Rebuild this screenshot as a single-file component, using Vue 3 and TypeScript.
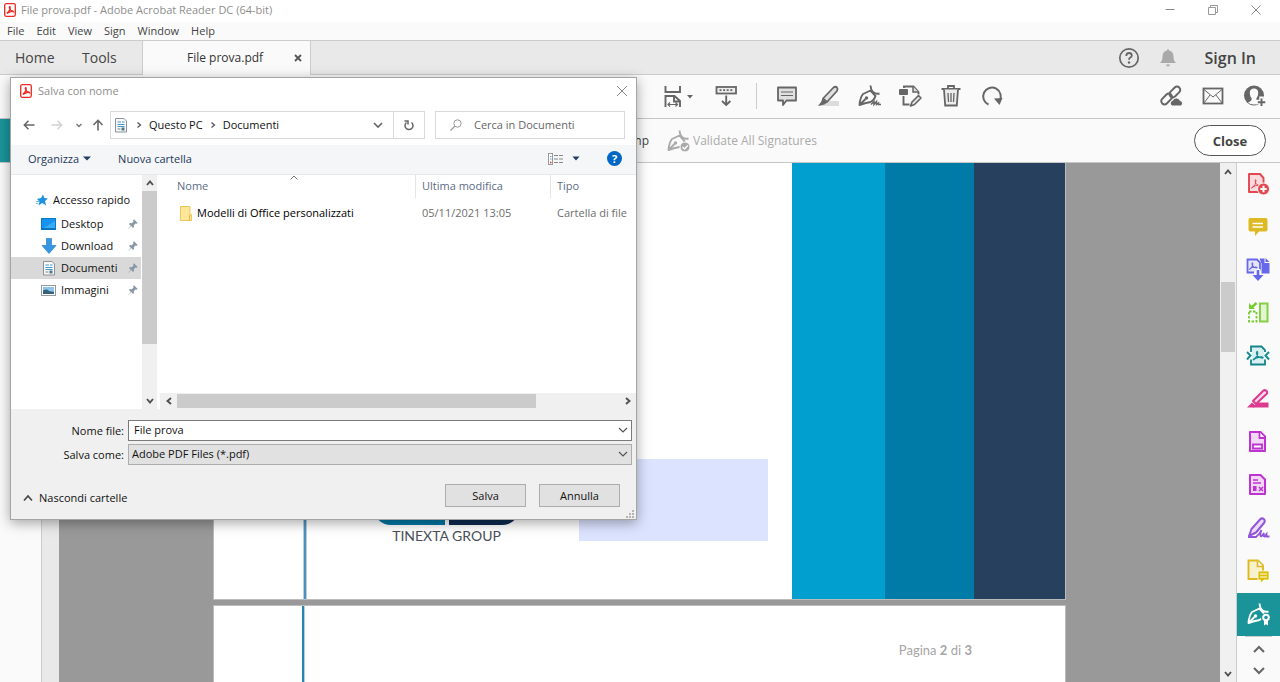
<script setup lang="ts">
import { ref } from 'vue'

interface Tool {
  name: string
  art: string
}

const menus: string[] = ['File', 'Edit', 'View', 'Sign', 'Window', 'Help']

const pen = (extra: string): string =>
  '<path d="M2.500 21 Q3 14 6 10 L13.500 6.500 L18.500 12 Q17 16.500 13.500 18 Q8 19 2.500 21 L8.500 15" fill="none" stroke="currentColor" stroke-width="1.900" stroke-linejoin="round"/>' +
  '<path d="M13.500 1.500 Q13.500 5 16 8 Q19 10.500 22.500 9.500" fill="none" stroke="currentColor" stroke-width="1.900"/>' +
  '<circle cx="9.500" cy="14" r="1.700" fill="currentColor"/>' + extra

const tools: Tool[] = [
  { name: 'Add comment', art: '<path d="M3 3.500 h18 v13 h-9.500 l-3.500 4.500 v-4.500 h-5 z" fill="#e0e0e0" stroke="currentColor" stroke-width="1.800" stroke-linejoin="round"/><path d="M6 8 h12 M6 11.500 h12" stroke="currentColor" stroke-width="1.200"/>' },
  { name: 'Highlight', art: '<path d="M9 17 h14 v5 h-20 z" fill="#dcdcdc"/><path d="M7 14.500 L17.500 3.500 Q19.500 2 21 3.500 Q22.300 5 21 7 L11 18 Z" fill="#e0e0e0" stroke="currentColor" stroke-width="1.800" stroke-linejoin="round"/><path d="M6.500 14.500 L11 18.500 L8.500 20.500 L2 22 L5 18 Z" fill="currentColor"/>' },
  { name: 'Sign', art: pen('<path d="M14 20.500 L17 17.500 V20.500 L19.500 17.500 V20.500 L21.500 19 V20.500 H24" fill="none" stroke="currentColor" stroke-width="1.500"/>') },
  { name: 'Edit PDF', art: '<path d="M6 4 v-1.500 h9.500 l5 5.500 v2.500 M5.500 12 v8.500 h6" fill="none" stroke="currentColor" stroke-width="1.900"/><path d="M15 2.500 v5.500 h5.500" fill="#ddd" stroke="currentColor" stroke-width="1.500"/><rect x="1" y="5" width="9" height="6" rx="1" fill="currentColor"/><path d="M12.500 22 L14 18 L20.500 11.500 L23 14 L16.500 20.500 Z" fill="#e3e3e3" stroke="currentColor" stroke-width="1.600" stroke-linejoin="round"/>' },
  { name: 'Delete', art: '<path d="M2.500 5 h19 M9 4.500 v-2.500 h6 v2.500" fill="none" stroke="currentColor" stroke-width="1.800"/><path d="M5 5.500 L6.200 21.500 h11.600 L19 5.500" fill="#ececec" stroke="currentColor" stroke-width="1.800"/><path d="M9 9 l.5 9 M12 9 v9 M15 9 l-.5 9" stroke="currentColor" stroke-width="1.300"/>' },
  { name: 'Rotate', art: '<path d="M8.500 20.500 A8.800 8.800 0 1 1 19.500 17" fill="none" stroke="currentColor" stroke-width="2"/><path d="M14 14.500 L22.500 14 L19.500 21 Z" fill="currentColor"/>' },
]

const shareTools: Tool[] = [
  { name: 'Share link', art: '<g fill="none" stroke="currentColor" stroke-width="2"><rect x="9.500" y="5" width="12.500" height="6.500" rx="3.200" transform="rotate(-45 15.500 8)"/><rect x="1.500" y="11.500" width="12.500" height="6.500" rx="3.200" transform="rotate(-45 8 15)"/></g><path d="M13.500 22 a2.800 2.800 0 0 1 0-5.500 a4 4 0 0 1 7.500 0 a2.800 2.800 0 0 1 .5 5.500 z" fill="currentColor" stroke="#fafafa" stroke-width="1"/>' },
  { name: 'Send by email', art: '<rect x="2.500" y="4.500" width="19" height="15" fill="none" stroke="currentColor" stroke-width="1.800"/><path d="M3 5.500 L12 13 L21 5.500 M3 19 L9 11 M21 19 L15 11" fill="none" stroke="currentColor" stroke-width="1"/>' },
  { name: 'Add person', art: '<circle cx="11" cy="11.500" r="10" fill="currentColor"/><path d="M11 4.500 Q15.200 4.500 15.200 9 Q15.200 12.500 13.300 14.500 Q13 16.500 15 17.500 L17 19 Q14.500 20.500 11 20.500 Q7 20.500 5 18.500 L7 17.500 Q9 16.500 8.700 14.500 Q6.800 12.500 6.800 9 Q6.800 4.500 11 4.500" fill="#fafafa"/><path d="M18.500 12.500 v11 M13 18 h11" stroke="#fafafa" stroke-width="4.500"/><path d="M18.500 14.500 v7.500 M14.800 18.200 h7.500" stroke="currentColor" stroke-width="1.900"/>' },
]

const acro = 'M7 15 Q12 12 11.500 7.500 Q11 5.500 10.600 8 Q11 12.500 16.500 13 Q17.500 12.300 15.500 12 Q10 12 7 15'
const page = 'M4 2 h10.500 l4.500 4.500 v14.500 h-15 z'

const sideTools: Tool[] = [
  { name: 'Create PDF', art: `<path d="M3 2 h11 l3.500 4 v14 h-14.500 z" fill="#f9dcdf" stroke="#e34850" stroke-width="1.900" stroke-linejoin="round"/><path transform="translate(-1.500 1)" d="${acro}" fill="none" stroke="#e34850" stroke-width="1"/><circle cx="17.500" cy="17" r="6" fill="#e34850" stroke="#fafafa"/><path d="M17.500 13.800 v6.400 M14.300 17 h6.400" stroke="#fff" stroke-width="2"/>` },
  { name: 'Comment', art: '<path d="M4 3 h15.500 q2 0 2 2 v9.500 q0 2-2 2 h-6.500 l-4 4.500 v-4.500 h-5 q-1.500 0-1.500-2 v-9.500 q0-2 1.500-2 z" fill="#ddb923"/><path d="M6.500 8.500 h10.500 M6.500 12 h10.500" stroke="#fff" stroke-width="1.500"/>' },
  { name: 'Combine files', art: `<path d="M8 14.500 h-6.500 v-13 h9.500 l3 3 v8" fill="#e5e5fb" stroke="#6767ec" stroke-width="1.800"/><path transform="translate(-2.500 -.500) scale(.8)" d="${acro}" fill="none" stroke="#6767ec" stroke-width="1.300"/><path d="M13.500 .5 h5 v4.500 h5 v10.500 h-8 v-10 z M19.500 0 l4 4 h-4 z" fill="#6767ec"/><path d="M12 11 v8" stroke="#fafafa" stroke-width="5"/><path d="M12 12 v7" stroke="#6767ec" stroke-width="2.600"/><path d="M6.500 17 h11 l-5.500 6 z" fill="#6767ec"/>` },
  { name: 'Organize pages', art: '<path d="M14 2.500 h7.500 v18 h-7.500 z" fill="#e3f5d2" stroke="#85d045" stroke-width="2"/><path d="M3 10.500 h7.500 v10 h-7.500 z" fill="none" stroke="#75cd30" stroke-width="1.800" stroke-dasharray="2.500 1.500"/><path d="M3 2 v6 h6 z" fill="#75cd30"/><path d="M10.500 2 l-5 4.500" stroke="#75cd30" stroke-width="2.400"/>' },
  { name: 'Compress PDF', art: `<path d="M5 8 v-5.500 h10.500 l3.500 3.500 v2 M5 15.500 v5 h14 v-5" fill="#d9eff0" stroke="#14868b" stroke-width="1.800"/><path d="M6 7.500 h12 v9 h-12z" fill="#d9eff0"/><path transform="translate(0 1)" d="${acro}" fill="none" stroke="#168e94" stroke-width="1.500"/><path d="M1 8 l3.500 3.500 L1 15.500 M23 8 l-3.500 3.500 L23 15.500" fill="none" stroke="#168e94" stroke-width="2"/>` },
  { name: 'Redact', art: '<path d="M12 15.500 h10.500 v5 h-16 z" fill="#dc3a8e"/><path d="M7 14 L17.500 3.500 Q19 2.500 20.500 4 Q22 5.500 20.500 7 L10 17 Z" fill="#f8d8e9" stroke="#dc3a8e" stroke-width="2" stroke-linejoin="round"/><path d="M6 15.500 l4 3.500 l-2.500 1.500 h-6.500 z" fill="#dc3a8e"/>' },
  { name: 'Fill fields', art: `<path d="${page}" fill="#f2d8f6" stroke="#bd32d0" stroke-width="2" stroke-linejoin="round"/><path d="M13.500 2 v6 h5.500 M7 14.500 h9 v4 h-9 z" fill="#fff" stroke="#bd32d0" stroke-width="1.800"/>` },
  { name: 'Prepare form', art: `<path d="${page}" fill="#f2d8f6" stroke="#bd32d0" stroke-width="2" stroke-linejoin="round"/><path d="M7 7 h5 M7 10 h8 M13 14 l4 4 M17 14 l-4 4" stroke="#bd32d0" stroke-width="1.500"/><path d="M7 13 h3.500 v5 h-3.500 z" fill="#bd32d0"/>` },
  { name: 'Fill and sign', art: '<path d="M5.500 13 L14 3.500 Q16 1.500 18 3.200 Q19.500 5 18 7 L10 16.500 L3 20 Z" fill="#eadcfa" stroke="#9256d9" stroke-width="2" stroke-linejoin="round"/><path d="M2 21 H10 Q14 18 15.500 14 Q13.500 20 15 20.500 Q17 19 18 17 Q17 20.500 18.500 20.500 L20.500 18 V20.500 H23.500" fill="none" stroke="#9256d9" stroke-width="1.800"/>' },
  { name: 'Send for comments', art: '<path d="M2.500 1.500 h9.500 l5 5 v13.500 h-14.500 z" fill="#f7f1cc" stroke="#ddb923" stroke-width="1.900"/><path d="M11.500 1.500 v6 h5.500" fill="#fff" stroke="#ddb923" stroke-width="1.700"/><path d="M12 12 h11 v9 h-5 l-3.500 3 v-3 h-2.500 z" fill="#dcbf00" stroke="#fafafa" stroke-width=".8"/><path d="M14 15 h7 M14 18 h7" stroke="#fff" stroke-width="1.200"/>' },
  { name: 'Certificates', art: pen('<circle cx="20" cy="16" r="5" fill="#1b9499"/><circle cx="20" cy="15.500" r="2.800" fill="#1b9499" stroke="currentColor" stroke-width="2"/><path d="M18 18 v5.500 l2-1.300 l2 1.300 v-5.500" fill="currentColor"/>') },
]

const validateArt: string = pen('<circle cx="19" cy="18" r="5" fill="#aaa" stroke="#fafafa"/><path d="M16.500 18 l2 2 l3.300-3.500" fill="none" stroke="#fff" stroke-width="1.300"/>')

const quickLinks: Tool[] = [
  { name: 'Desktop', art: '<rect x=".5" y="2.500" width="14" height="11" fill="#1693ee" stroke="#0878c8"/><path d="M1 13 L14 5 V13 Z" fill="#35adf8"/><path d="M1 12.700 h13" stroke="#0769b0"/>' },
  { name: 'Download', art: '<path d="M5.500 .5 h5 v7 h4.500 L8 15.500 L1 7.500 h4.500 z" fill="#3797e3" stroke="#2580c9" stroke-width=".7"/>' },
  { name: 'Documenti', art: '<path d="M2.500 1.500 h8.500 l2.500 2.500 v11 h-11 z" fill="#f8f8f8" stroke="#8b9299"/><path d="M4.500 5 h3.500 M9 5 h2.500 M4.500 7.500 h7 M4.500 9.500 h7" stroke="#4499cb"/><path d="M4.500 12 h3" stroke="#7b8389"/><rect x="8.500" y="10.500" width="3" height="3" fill="#53778a"/>' },
  { name: 'Immagini', art: '<rect x=".5" y="3.500" width="14" height="10" fill="#fff" stroke="#929aa1"/><path d="M2 5 h11 v7 h-11 z" fill="#8fc4ec"/><path d="M2 8.500 q4-2 6 .5 l5 1 v2 h-11 z" fill="#35617b"/>' },
]

const fileName = ref<string>('File prova')
const fileType = ref<string>('Adobe PDF Files (*.pdf)')
const search = ref<string>('')
const selected = ref<string>('Documenti')
</script>

<template>
  <div class="window">
    <header class="titlebar">
      <svg class="pdf" viewBox="0 0 12 14"><rect x=".7" y=".7" width="10.600" height="12.600" rx="1.500" fill="#fff" stroke="#ee2a20" stroke-width="1.300" /><path d="M2.800 10.300 Q7 7 6 3.800 Q5 3.500 5.500 5 Q6 8 9.500 8.800 Q9 7.300 2.800 10.300" fill="none" stroke="#ee2a20" stroke-width="1.400" /></svg>
      <span class="title">File prova.pdf - Adobe Acrobat Reader DC (64-bit)</span>
      <button aria-label="Minimize"><svg viewBox="0 0 12 12"><path d="M1.500 5.500 h9" stroke="#888" /></svg></button>
      <button aria-label="Restore"><svg viewBox="0 0 12 12"><path d="M1.500 3.500 h7 v7 h-7 z M3.500 3 v-1.500 h7 v7 h-1.500" fill="none" stroke="#999" /></svg></button>
      <button aria-label="Close window"><svg viewBox="0 0 12 12"><path d="M1.500 1.500 l9 9 M10.500 1.500 l-9 9" stroke="#888" /></svg></button>
    </header>

    <nav class="menubar">
      <button v-for="m in menus" :key="m">{{ m }}</button>
    </nav>

    <div class="tabs">
      <button class="tab home">Home</button>
      <button class="tab toolstab">Tools</button>
      <div class="doc-tab">
        <span>File prova.pdf</span>
        <button aria-label="Close tab"><svg viewBox="0 0 8 8"><path d="M1 1 l6 6 M7 1 l-6 6" stroke="#555" stroke-width="1.800" /></svg></button>
      </div>
      <div class="account">
        <button aria-label="Help"><svg class="i22" viewBox="0 0 22 22"><circle cx="11" cy="11" r="9.200" fill="none" stroke="#666" stroke-width="1.700" /><path d="M8.300 9 q0-3 2.700-3 q2.800 0 2.800 2.500 q0 1.500-1.700 2.300 q-1.100.6-1.100 1.900" fill="none" stroke="#666" stroke-width="1.800" /><circle cx="11" cy="15.500" r="1.200" fill="#666" /></svg></button>
        <button aria-label="Notifications"><svg class="i22" viewBox="0 0 22 22"><path d="M10 3.500 q0-1.500 1-1.500 t1 1.500 q4.500 1 4.500 6 q0 4.500 2.500 6.500 h-16 q2.500-2 2.500-6.500 q0-5 4.500-6 M8.800 17.500 h4.400 q-.7 2-2.200 2 t-2.200-2" fill="#a9a9a9" /></svg></button>
        <button class="signin">Sign In</button>
      </div>
    </div>

    <div class="toolbar">
      <button class="fit" aria-label="Fit page">
        <svg class="i24" viewBox="0 0 24 24"><path d="M4.500 2 v6 h14.500 v-6 M4.500 23 v-11 h9 l5.500 5 v6 M13 12.500 v5 h5.500" fill="none" stroke="currentColor" stroke-width="1.900" /><path d="M7 20.500 h9.500 M9 18.500 l-2 2 l2 2 M14.500 18.500 l2 2 l-2 2" fill="none" stroke="currentColor" stroke-width="1.200" /></svg>
        <svg class="drop" viewBox="0 0 8 5"><path d="M1 1 h6 L4 4.500 z" fill="currentColor" /></svg>
      </button>
      <button aria-label="Scrolling mode"><svg class="i24" viewBox="0 0 24 24"><rect x="2.500" y="3" width="19.500" height="6.500" fill="#eee" stroke="currentColor" stroke-width="1.800" /><path d="M5.500 6.200 h14" stroke="currentColor" stroke-width="1.800" stroke-dasharray="2 1.600" /><path d="M12.200 11.500 v9 M8 17 l4.200 4 l4.200 -4" fill="none" stroke="currentColor" stroke-width="1.900" /></svg></button>
      <span class="rule"></span>
      <button v-for="t in tools" :key="t.name" :aria-label="t.name"><svg class="i24" viewBox="0 0 24 24" v-html="t.art"></svg></button>
      <div class="share">
        <button v-for="t in shareTools" :key="t.name" :aria-label="t.name"><svg class="i24" viewBox="0 0 24 24" v-html="t.art"></svg></button>
      </div>
    </div>

    <div class="signbar">
      <span class="teal"></span>
      <button class="stamp">Time Stamp</button>
      <button class="validate" disabled>
        <svg class="i24" viewBox="0 0 24 24" v-html="validateArt"></svg>
        Validate All Signatures
      </button>
      <button class="close">Close</button>
    </div>

    <main class="body">
      <div class="left-pane"></div>
      <div class="left-strip"></div>
      <div class="canvas">
        <section class="page first">
          <span class="line"></span>
          <div class="content">
            <div class="logo">
              <div class="pill"><span></span><span></span></div>
              <p>TINEXTA GROUP</p>
            </div>
            <div class="sign-field"></div>
          </div>
          <span class="stripe cyan"></span>
          <span class="stripe blue"></span>
          <span class="stripe navy"></span>
        </section>
        <section class="page second">
          <span class="line"></span>
          <p>Pagina <b>2</b> di <b>3</b></p>
        </section>
      </div>
      <div class="scroll tall">
        <button aria-label="Scroll up"><svg viewBox="0 0 8 8"><path d="M1 6 l3-3.500 l3 3.500" /></svg></button>
        <span class="thumb"></span>
        <button aria-label="Scroll down"><svg viewBox="0 0 8 8"><path d="M1 2 l3 3.500 l3 -3.500" /></svg></button>
      </div>
      <aside class="rail">
        <button v-for="t in sideTools" :key="t.name" :aria-label="t.name" :class="{ active: t.name === 'Certificates' }"><svg class="i24" viewBox="0 0 24 24" v-html="t.art"></svg></button>
        <div class="rail-nav">
          <button aria-label="Previous tools"><svg viewBox="0 0 12 8"><path d="M1 7 l5-5 l5 5" /></svg></button>
          <button aria-label="More tools"><svg viewBox="0 0 12 8"><path d="M1 1 l5 5 l5-5" /></svg></button>
        </div>
      </aside>
    </main>

    <section class="dialog" role="dialog" aria-label="Salva con nome">
      <header class="d-title">
        <svg class="pdf" viewBox="0 0 12 14"><rect x=".7" y=".7" width="10.600" height="12.600" rx="1.500" fill="#fff" stroke="#ee2a20" stroke-width="1.300" /><path d="M2.800 10.300 Q7 7 6 3.800 Q5 3.500 5.500 5 Q6 8 9.500 8.800 Q9 7.300 2.800 10.300" fill="none" stroke="#ee2a20" stroke-width="1.400" /></svg>
        <span>Salva con nome</span>
        <button aria-label="Chiudi"><svg class="i12" viewBox="0 0 12 12"><path d="M1 1 l10 10 M11 1 l-10 10" stroke="#888" /></svg></button>
      </header>

      <div class="d-nav">
        <button class="arrow" aria-label="Indietro"><svg class="i12" viewBox="0 0 12 12"><path d="M11.500 6 h-10 M5.500 1.800 L1.300 6 l4.200 4.200" fill="none" stroke="#666" stroke-width="1.500" /></svg></button>
        <button class="arrow next" aria-label="Avanti"><svg class="i12" viewBox="0 0 12 12"><path d="M.5 6 h10 M6.500 1.800 L10.700 6 l-4.200 4.200" fill="none" stroke="#d2d2d2" stroke-width="1.300" /></svg></button>
        <button class="arrow recent" aria-label="Percorsi recenti"><svg class="i8" viewBox="0 0 8 8"><path d="M1.500 3 l2.500 2.500 l2.500 -2.500" fill="none" stroke="#777" stroke-width="1.400" /></svg></button>
        <button class="arrow up" aria-label="Su"><svg class="i12" viewBox="0 0 12 12"><path d="M6 11.500 v-10 M1.500 6 L6 1.300 L10.500 6" fill="none" stroke="#666" stroke-width="1.600" /></svg></button>
        <div class="address">
          <svg class="i16" viewBox="0 0 16 16" v-html="quickLinks[2].art"></svg>
          <svg class="i8" viewBox="0 0 8 8"><path d="M2.500 1.500 l3 2.500 l-3 2.500" fill="none" stroke="#555" stroke-width="1.300" /></svg>
          <button>Questo PC</button>
          <svg class="i8" viewBox="0 0 8 8"><path d="M2.500 1.500 l3 2.500 l-3 2.500" fill="none" stroke="#555" stroke-width="1.300" /></svg>
          <button>Documenti</button>
          <button class="open" aria-label="Percorsi precedenti"><svg class="i10" viewBox="0 0 10 10"><path d="M1 3 l4 4 l4 -4" fill="none" stroke="#666" stroke-width="1.700" /></svg></button>
          <button class="refresh" aria-label="Aggiorna"><svg class="i12" viewBox="0 0 12 12"><path d="M3.500 3.500 A4 4 0 1 0 8.500 3.500 M1.500 2 h3.500 v3.500" fill="none" stroke="#666" stroke-width="1.500" /></svg></button>
        </div>
        <label class="search">
          <svg class="i12" viewBox="0 0 12 12"><circle cx="7.500" cy="4.500" r="3.700" fill="none" stroke="#999" /><path d="M4.800 7.200 L.5 11.500" stroke="#999" stroke-width="1.200" /></svg>
          <input v-model="search" placeholder="Cerca in Documenti" aria-label="Cerca in Documenti" />
        </label>
      </div>

      <div class="d-tools">
        <button>Organizza <svg class="drop" viewBox="0 0 8 5"><path d="M0 .5 h8 L4 4.500 z" fill="#1e3c66" /></svg></button>
        <button class="new">Nuova cartella</button>
        <button class="views" aria-label="Cambia visualizzazione">
          <svg class="i16" viewBox="0 0 16 12"><rect x=".5" y=".5" width="4" height="11" fill="#fff" stroke="#999" /><path d="M2 3.500 h1.500 M2 6 h1.500" stroke="#579ad0" /><path d="M2 9.500 h1.500" stroke="#c33" stroke-width="1.500" /><path d="M6 2.500 h4 M11 2.500 h4 M6 6 h4 M11 6 h4 M6 9.500 h4 M11 9.500 h4" stroke="#888" /></svg>
          <svg class="drop" viewBox="0 0 8 5"><path d="M.5 .5 h7 L4 4.500 z" fill="#1e3c66" /></svg>
        </button>
        <button class="help" aria-label="Guida">?</button>
      </div>

      <div class="d-main">
        <nav class="tree">
          <button class="root"><svg class="i12" viewBox="0 0 12 12"><path d="M7 .5 L8.300 4 L12 4.500 L9 7 L10 11.500 L6.300 9 L2.500 11.500 L3.500 7.500 L1 5 L5 4 Z" fill="#1d91df" /><path d="M0 7.500 h3 M0 9.500 h2" stroke="#6bb9ed" /></svg>Accesso rapido</button>
          <button v-for="q in quickLinks" :key="q.name" :class="{ on: q.name === selected }" @click="selected = q.name">
            <svg class="i16" viewBox="0 0 16 16" v-html="q.art"></svg>
            <span>{{ q.name }}</span>
            <svg class="pin" viewBox="0 0 10 10"><path d="M6 .3 L9.700 4 L8.500 4.800 L7.500 4.600 L5.800 6.300 L6 8 L5 9 L3.200 7 L.5 9.700 L.3 9.500 L2.800 6.700 L1 5 L2 4 L3.800 4.200 L5.500 2.500 L5.200 1.300 Z" fill="#8897a5" /></svg>
          </button>
        </nav>
        <div class="scroll side">
          <button aria-label="Scorri su"><svg viewBox="0 0 8 8"><path d="M1 6 l3-3.500 l3 3.500" /></svg></button>
          <span class="thumb"></span>
          <button aria-label="Scorri giù"><svg viewBox="0 0 8 8"><path d="M1 2 l3 3.500 l3 -3.500" /></svg></button>
        </div>
        <div class="list">
          <table>
            <thead>
              <tr>
                <th class="name">Nome<svg class="sort" viewBox="0 0 8 5"><path d="M.5 4.500 L4 1 l3.500 3.500" fill="none" stroke="#777" /></svg></th>
                <th class="date">Ultima modifica</th>
                <th>Tipo</th>
              </tr>
            </thead>
            <tbody>
              <tr>
                <td class="name"><div><svg class="folder" viewBox="0 0 12 15"><path d="M.5 .5 h9.500 v8 h1.500 v6 h-11 z" fill="#ffe79a" stroke="#ecc65b" /><path d="M9.500 9 v5.500" stroke="#e0b64b" /></svg>Modelli di Office personalizzati</div></td>
                <td>05/11/2021 13:05</td>
                <td>Cartella di file</td>
              </tr>
            </tbody>
          </table>
          <div class="scroll wide">
            <button aria-label="Scorri a sinistra"><svg viewBox="0 0 8 8"><path d="M6 1 l-3.500 3 l3.500 3" /></svg></button>
            <span class="thumb"></span>
            <button aria-label="Scorri a destra"><svg viewBox="0 0 8 8"><path d="M2 1 l3.500 3 l-3.500 3" /></svg></button>
          </div>
        </div>
      </div>

      <div class="d-form">
        <label for="file-name">Nome file:</label>
        <div class="field">
          <input id="file-name" v-model="fileName" />
          <svg class="i10" viewBox="0 0 10 10"><path d="M1 3 l4 4 l4 -4" fill="none" stroke="#555" stroke-width="1.200" /></svg>
        </div>
        <label for="file-type">Salva come:</label>
        <div class="field grey">
          <select id="file-type" v-model="fileType"><option>Adobe PDF Files (*.pdf)</option></select>
          <svg class="i10" viewBox="0 0 10 10"><path d="M1 3 l4 4 l4 -4" fill="none" stroke="#555" stroke-width="1.200" /></svg>
        </div>
      </div>

      <footer class="d-foot">
        <button class="hide"><svg class="i10" viewBox="0 0 10 10"><path d="M1 7.500 l4 -4.500 l4 4.500" fill="none" stroke="#444" stroke-width="1.600" /></svg>Nascondi cartelle</button>
        <button class="push">Salva</button>
        <button class="push">Annulla</button>
        <svg class="grip" viewBox="0 0 9 9"><path d="M6 1 h2 M3 4 h2 M6 4 h2 M0 7 h2 M3 7 h2 M6 7 h2" stroke="#b4b4b4" stroke-width="2" /></svg>
      </footer>
    </section>
  </div>
</template>

<style>
body {
  margin: 0;
  overflow: hidden;
}
</style>

<style scoped>
* {
  box-sizing: border-box;
}
.window {
  position: relative;
  display: flex;
  flex-direction: column;
  height: 100vh;
  overflow: hidden;
  background: #fafafa;
  color: #444;
  font: 11px/16px "Open Sans", "Noto Sans", sans-serif;
}
button {
  display: flex;
  align-items: center;
  flex: none;
  margin: 0;
  padding: 0;
  border: 0;
  background: none;
  color: inherit;
  font: inherit;
  white-space: nowrap;
}
svg {
  display: block;
  flex: none;
  overflow: visible;
}
p {
  margin: 0;
}
.i8 { width: 8px; height: 8px; }
.i10 { width: 10px; height: 10px; }
.i12 { width: 12px; height: 12px; }
.i16 { width: 16px; height: 16px; }
.i22 { width: 22px; height: 22px; }
.i24 { width: 24px; height: 24px; }
.drop { width: 8px; height: 5px; }
.pdf { width: 12px; height: 14px; }

.titlebar {
  display: flex;
  align-items: center;
  flex: none;
  height: 22px;
  padding: 0 18px 2px 4px;
  background: #fff;
  color: #8e8e8e;
}
.title {
  flex: 1;
  margin-left: 5px;
}
.titlebar button {
  margin-left: 31px;
}
.titlebar button svg {
  width: 12px;
  height: 12px;
}
.menubar {
  display: flex;
  flex: none;
  gap: 12px;
  height: 19px;
  padding: 0 7px;
  border-bottom: 1px solid #ccc;
}
.tabs {
  display: flex;
  flex: none;
  height: 34px;
  border-bottom: 1px solid #ccc;
  background: #e9e9e9;
}
.tab {
  font-size: 14px;
}
.home {
  width: 67px;
  padding-left: 15px;
}
.toolstab {
  width: 75px;
  padding-left: 15px;
}
.doc-tab {
  display: flex;
  align-items: center;
  justify-content: space-between;
  width: 169px;
  margin-bottom: -1px;
  padding: 0 8px 0 44px;
  border: solid #ccc;
  border-width: 0 1px;
  background: #fafafa;
  font-size: 12px;
  color: #333;
}
.doc-tab svg {
  width: 8px;
  height: 8px;
}
.account {
  display: flex;
  align-items: center;
  gap: 17px;
  margin-left: auto;
  padding-right: 24px;
}
.signin {
  margin-left: 9px;
  font-size: 16px;
  font-weight: 600;
}
.toolbar {
  display: flex;
  align-items: center;
  flex: none;
  gap: 17px;
  height: 44px;
  padding: 0 13px 1px 661px;
  border-bottom: 1px solid #c6c6c6;
  color: #666;
}
.fit {
  width: 36px;
}
.fit .drop {
  margin-left: 1px;
}
.rule {
  width: 1px;
  height: 26px;
  margin: 0 1px;
  background: #ccc;
}
.share {
  display: flex;
  gap: 18px;
  margin-left: auto;
}
.signbar {
  display: flex;
  align-items: center;
  flex: none;
  height: 44px;
  padding-right: 14px;
  border-bottom: 1px solid #c6c6c6;
  font-size: 12px;
}
.teal {
  align-self: stretch;
  width: 41px;
  background: #1b9499;
}
.stamp {
  justify-content: flex-end;
  width: 608px;
}
.validate {
  margin-left: 17px;
  gap: 3px;
  color: #aaa;
}
.close {
  justify-content: center;
  width: 72px;
  height: 31px;
  margin-left: auto;
  border: 1px solid #555;
  border-radius: 16px;
  background: #fff;
  font-size: 13px;
  font-weight: 700;
}
.body {
  display: flex;
  flex: 1;
  min-height: 0;
}
.left-pane {
  width: 41px;
}
.left-strip {
  width: 18px;
  border-left: 1px solid #ccc;
  background: #e9e9e9;
}
.canvas {
  display: flex;
  flex: 1;
  flex-direction: column;
  align-items: center;
  gap: 5px;
  overflow: hidden;
  background: #999;
}
.page {
  display: flex;
  flex: none;
  width: 853px;
  border: 1px solid #bbb;
  background: #fff;
}
.first {
  height: 437px;
  border-top: 0;
}
.line {
  flex: none;
  width: 4px;
  margin-left: 89px;
  border: 1px solid #b5d0e3;
  border-width: 0 1px;
  background: #4f91bd;
}
.second .line {
  width: 3px;
  margin-left: 88px;
  border-width: 0 1px 0 0;
  background: #2584b1;
}
.content {
  display: flex;
  flex: 1;
  align-items: flex-end;
  justify-content: flex-end;
  gap: 59px;
  padding: 0 24px 52px 0;
}
.logo {
  width: 147px;
  text-align: center;
  font-size: 14px;
  line-height: 22px;
  color: #4b4f58;
}
.pill {
  display: flex;
  gap: 4px;
  height: 36px;
  border-radius: 18px;
  overflow: hidden;
}
.pill span {
  flex: 1;
  background: #0078a6;
}
.pill span + span {
  background: #0e2b50;
}
.logo p {
  font-family: Lato, "Open Sans", sans-serif;
}
.sign-field {
  width: 189px;
  height: 82px;
  margin-bottom: 6px;
  background: #dce3ff;
}
.stripe {
  flex: none;
}
.cyan { width: 93px; background: #009fcf; }
.blue { width: 89px; background: #007aa6; }
.navy { width: 91px; background: #27405e; }
.second {
  height: 300px;
}
.second p {
  margin: 36px 93px 0 auto;
  color: #a6a6a6;
  font-family: Lato, "Open Sans", sans-serif;
  font-size: 13px;
}
.scroll {
  display: flex;
  flex: none;
  background: #f0f0f0;
}
.scroll button {
  justify-content: center;
  width: 17px;
  height: 17px;
}
.scroll svg {
  width: 8px;
  height: 8px;
  fill: none;
  stroke: #505050;
  stroke-width: 1.9;
}
.thumb {
  background: #cbcbcb;
}
.tall {
  flex-direction: column;
  align-items: center;
  justify-content: space-between;
  width: 16px;
}
.tall .thumb {
  width: 14px;
  height: 70px;
  margin-bottom: 212px;
}
.rail {
  width: 44px;
  border-left: 1px solid #ccc;
  background: #fafafa;
}
.rail > button {
  justify-content: center;
  width: 100%;
  height: 43px;
  padding: 0 1px 1px 0;
}
.rail .active {
  background: #1b9499;
  color: #fff;
}
.rail-nav {
  display: flex;
  flex-direction: column;
  align-items: center;
  gap: 14px;
  width: 27px;
  margin: 0 auto;
  padding-top: 8px;
  border-top: 1px solid #ccc;
}
.rail-nav svg {
  width: 12px;
  height: 8px;
  fill: none;
  stroke: #666;
  stroke-width: 2;
}

.dialog {
  position: absolute;
  top: 77px;
  left: 10px;
  display: flex;
  flex-direction: column;
  width: 627px;
  border: 1px solid #a5a5a5;
  background: #fff;
  box-shadow: 0 3px 12px rgba(0, 0, 0, 0.35);
  color: #111;
}
.d-title {
  display: flex;
  align-items: center;
  gap: 6px;
  height: 26px;
  padding: 0 8px 0 9px;
  color: #8e8e8e;
}
.d-title button {
  margin-left: auto;
}
.d-nav {
  display: flex;
  align-items: center;
  height: 41px;
  padding: 0 11px 0 12px;
}
.arrow {
  width: 28px;
}
.arrow.next {
  width: 24px;
}
.arrow.recent {
  width: 17px;
}
.arrow.up {
  width: 18px;
}
.address {
  display: flex;
  align-items: center;
  gap: 6px;
  width: 315px;
  height: 28px;
  padding-left: 2px;
  border: 1px solid #d9d9d9;
}
.open {
  margin: 0 4px 0 auto;
}
.refresh {
  justify-content: center;
  align-self: stretch;
  width: 31px;
  border-left: 1px solid #d9d9d9;
}
.search {
  display: flex;
  align-items: center;
  flex: 1;
  gap: 12px;
  height: 28px;
  margin-left: 10px;
  padding-left: 14px;
  border: 1px solid #d9d9d9;
}
input,
select {
  flex: 1;
  min-width: 0;
  margin: 0;
  padding: 0;
  border: 0;
  outline: 0;
  background: none;
  color: inherit;
  font: inherit;
  appearance: none;
}
input::placeholder {
  color: #666;
  opacity: 1;
}
.d-tools {
  display: flex;
  align-items: center;
  height: 30px;
  padding: 0 14px 2px 17px;
  border-bottom: 1px solid #e6e8ea;
  background: #f5f6f7;
  color: #1e395b;
}
.d-tools button {
  gap: 4px;
}
.d-tools .new {
  margin-left: 27px;
}
.d-tools .views {
  gap: 8px;
  margin-left: auto;
}
.views .i16 {
  height: 12px;
}
.d-tools .help {
  justify-content: center;
  width: 15px;
  height: 15px;
  margin-left: 27px;
  border-radius: 8px;
  background: #0067c5;
  color: #fff;
  font-weight: 700;
}
.d-main {
  display: flex;
  height: 234px;
}
.tree {
  width: 130px;
  padding-top: 14px;
}
.tree button {
  gap: 4px;
  width: 100%;
  height: 22px;
  padding: 0 3px 0 30px;
}
.tree .root {
  gap: 5px;
  height: 24px;
  padding: 0 0 2px 25px;
}
.tree .on {
  background: #d9d9d9;
}
.pin {
  width: 10px;
  height: 10px;
  margin-left: auto;
}
.side {
  flex-direction: column;
  width: 15px;
  margin: 0 3px 0 1px;
}
.side button {
  width: 15px;
  height: 16px;
}
.side .thumb {
  height: 153px;
}
.side button:last-child {
  margin-top: auto;
}
.list {
  display: flex;
  flex: 1;
  flex-direction: column;
  justify-content: space-between;
}
table {
  width: 100%;
  border-spacing: 0;
  table-layout: fixed;
}
th {
  position: relative;
  height: 23px;
  padding: 0 0 2px 6px;
  border-left: 1px solid #e5e5e5;
  color: #5b6b85;
  font-weight: 400;
  text-align: left;
}
th.name {
  width: 255px;
  border-left: 0;
  padding-left: 17px;
}
th.date {
  width: 135px;
}
.sort {
  position: absolute;
  top: 0;
  left: 130px;
  width: 8px;
  height: 5px;
}
td {
  height: 32px;
  padding: 0 0 2px 7px;
  color: #6d6d6d;
  white-space: nowrap;
}
td.name {
  padding-left: 20px;
  color: #000;
}
td div {
  display: flex;
  align-items: center;
  gap: 5px;
}
.folder {
  width: 12px;
  height: 15px;
}
.wide {
  height: 16px;
}
.wide .thumb {
  width: 359px;
  height: 14px;
  margin-top: 1px;
}
.wide button {
  width: 17px;
  height: 16px;
}
.wide button:last-child {
  margin-left: auto;
}
.d-form {
  display: grid;
  grid-template-columns: 113px 1fr;
  gap: 3px 4px;
  align-items: center;
  padding: 11px 4px 0 0;
  background: #f0f0f0;
}
.d-form label {
  text-align: right;
}
.field {
  display: flex;
  align-items: center;
  height: 21px;
  padding: 0 3px 2px 5px;
  border: 1px solid #7a7a7a;
  background: #fff;
}
.field.grey {
  padding-left: 3px;
  border-color: #adadad;
  background: #e1e1e1;
}
.d-foot {
  display: flex;
  align-items: center;
  height: 54px;
  padding: 7px 1px 0 12px;
  background: #f0f0f0;
}
.hide {
  gap: 6px;
  margin-right: auto;
  padding-top: 4px;
}
.push {
  justify-content: center;
  width: 81px;
  height: 23px;
  margin-left: 13px;
  border: 1px solid #adadad;
  background: #e1e1e1;
}
.grip {
  align-self: flex-end;
  width: 9px;
  height: 9px;
  margin: 0 0 0 6px;
}
</style>
